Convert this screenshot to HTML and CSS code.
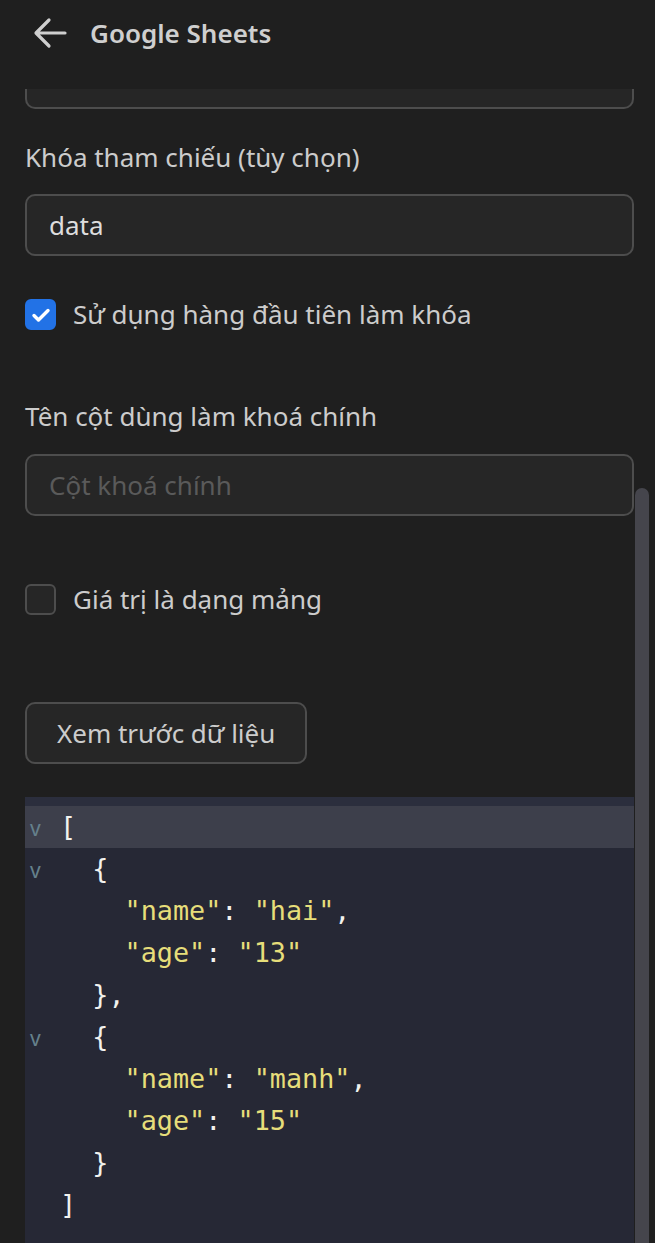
FILE: index.html
```html
<!DOCTYPE html>
<html lang="vi">

<head>
    <meta charset="UTF-8">
    <meta name="viewport" content="width=device-width, initial-scale=1.0">
    <title>Google Sheets</title>
    <link rel="stylesheet" href="styles.css">
</head>

<body>
    <header class="topbar">
        <svg class="back-icon" width="34" height="34" viewBox="0 0 34 34">
            <path d="M32 17H4M16 4L3 17l13 13" fill="none" stroke="#cfcfcf" stroke-width="3.2" stroke-linecap="round" stroke-linejoin="round"/>
        </svg>
        <span class="title">Google Sheets</span>
    </header>

    <main class="content">
        <!-- field scrolled under the header -->
        <div class="input input-cut"></div>

        <div class="field-label first">Khóa tham chiếu (tùy chọn)</div>
        <div class="input">data</div>

        <label class="check check-first">
            <span class="box checked">
                <svg width="22" height="22" viewBox="0 0 22 22">
                    <path d="M4 11.5l4.5 4.5L18 6.5" fill="none" stroke="#fff" stroke-width="3.4" stroke-linecap="round" stroke-linejoin="round"/>
                </svg>
            </span>
            Sử dụng hàng đầu tiên làm khóa
        </label>

        <div class="field-label second">Tên cột dùng làm khoá chính</div>
        <div class="input placeholder">Cột khoá chính</div>

        <label class="check check-second">
            <span class="box"></span>
            Giá trị là dạng mảng
        </label>

        <button class="button">Xem trước dữ liệu</button>

        <div class="json-view">
            <div class="line active"><span class="fold">v</span><span class="code">[</span></div>
            <div class="line"><span class="fold">v</span><span class="code">  {</span></div>
            <div class="line"><span class="fold"></span><span class="code">    <span class="str">"name"</span>: <span class="str">"hai"</span>,</span></div>
            <div class="line"><span class="fold"></span><span class="code">    <span class="str">"age"</span>: <span class="str">"13"</span></span></div>
            <div class="line"><span class="fold"></span><span class="code">  },</span></div>
            <div class="line"><span class="fold">v</span><span class="code">  {</span></div>
            <div class="line"><span class="fold"></span><span class="code">    <span class="str">"name"</span>: <span class="str">"manh"</span>,</span></div>
            <div class="line"><span class="fold"></span><span class="code">    <span class="str">"age"</span>: <span class="str">"15"</span></span></div>
            <div class="line"><span class="fold"></span><span class="code">  }</span></div>
            <div class="line"><span class="fold"></span><span class="code">]</span></div>
            <div class="line"><span class="fold"></span><span class="code"></span></div>
        </div>
    </main>

    <div class="scroll-thumb"></div>
</body>

</html>
```

FILE: styles.css
```css
body {
    margin: 0;
    padding: 0;
    background-color: #1f1f1f;
    color: #cccccc;
    font-family: "Noto Sans", "Open Sans", sans-serif;
    height: 1243px;
    overflow: hidden;
    position: relative;
}

.topbar {
    height: 89px;
    display: flex;
    align-items: flex-start;
    padding: 16px 0 0 33px;
    box-sizing: border-box;
    background-color: #1f1f1f;
}

.back-icon {
    display: block;
}

.title {
    margin-left: 23px;
    font-size: 26px;
    font-weight: 600;
    line-height: 34px;
    color: #cfcfcf;
}

.content {
    padding: 0 21px 0 25px;
    display: flex;
    flex-direction: column;
    align-items: flex-start;
}

.input {
    width: 100%;
    height: 62px;
    box-sizing: border-box;
    background-color: #262626;
    border: 2px solid #4d4d4d;
    border-radius: 10px;
    padding: 0 22px;
    display: flex;
    align-items: center;
    font-size: 26px;
    color: #dddddd;
}

.input-cut {
    height: 20px;
    border-top: none;
    border-top-left-radius: 0;
    border-top-right-radius: 0;
}

.placeholder {
    color: #5a5a5a;
}

.field-label {
    font-size: 26px;
    line-height: 30px;
    color: #cccccc;
}

.field-label.first {
    margin: 33px 0 22px;
}

.field-label.second {
    margin: 71px 0 23px;
}

.check {
    display: flex;
    align-items: center;
    font-size: 26px;
    line-height: 31px;
    color: #cccccc;
}

.check-first {
    margin-top: 43px;
}

.check-second {
    margin-top: 68px;
}

.box {
    width: 31px;
    height: 31px;
    box-sizing: border-box;
    border: 2px solid #4d4d4d;
    border-radius: 6px;
    background-color: #262626;
    margin-right: 17px;
    display: flex;
    align-items: center;
    justify-content: center;
}

.box.checked {
    background-color: #2272e6;
    border-color: #2272e6;
}

.button {
    margin-top: 87px;
    height: 62px;
    padding: 0 30px;
    background-color: #262626;
    border: 2px solid #4d4d4d;
    border-radius: 10px;
    font-family: inherit;
    font-size: 26px;
    color: #cccccc;
}

.json-view {
    margin-top: 33px;
    width: 100%;
    background-color: #262835;
    border-top: 9px solid #2b2e3d;
    font-family: "DejaVu Sans Mono", "Liberation Mono", monospace;
}

.line {
    display: flex;
    height: 42px;
    align-items: baseline;
}

.line.active {
    background-color: #3d3f4b;
}

.fold {
    width: 35px;
    padding-left: 5px;
    box-sizing: border-box;
    font-family: "Noto Sans", sans-serif;
    font-size: 21px;
    color: #65808b;
    line-height: 42px;
}

.code {
    white-space: pre;
    font-size: 26.8px;
    line-height: 42px;
    color: #f2f2ee;
}

.str {
    color: #e6de7a;
}

.scroll-thumb {
    position: absolute;
    left: 635px;
    top: 488px;
    width: 14px;
    bottom: 0;
    background-color: #45454c;
    border-radius: 7px 7px 0 0;
}
```
